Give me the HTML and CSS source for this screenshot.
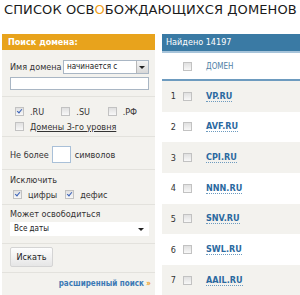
FILE: index.html
```html
<!DOCTYPE html>
<html lang="ru">
<head>
    <meta charset="UTF-8">
    <title>Список освобождающихся доменов</title>
    <link rel="stylesheet" href="styles.css">
</head>
<body>
    <h1 class="title">СПИСОК ОСВ<span class="accent">О</span>БОЖДАЮЩИХСЯ ДОМЕНОВ</h1>
    <div class="layout">
        <aside class="search">
            <div class="search-head">Поиск домена:</div>
            <div class="block block-name">
                <div class="row name-row">
                    <span class="label">Имя домена</span>
                    <div class="select select-small">начинается с<span class="arrow-btn"><span class="arrow"></span></span></div>
                </div>
                <div class="text-input"></div>
            </div>
            <div class="block block-zones">
                <div class="row zones">
                    <label class="check"><span class="cb checked"></span>.RU</label>
                    <label class="check"><span class="cb"></span>.SU</label>
                    <label class="check"><span class="cb"></span>.РФ</label>
                </div>
                <label class="check"><span class="cb"></span><span class="underline">Домены 3-го уровня</span></label>
            </div>
            <div class="block block-len">
                <div class="row">Не более <span class="len-input"></span> символов</div>
            </div>
            <div class="block block-excl">
                <div class="label">Исключить</div>
                <div class="row excl">
                    <label class="check"><span class="cb checked"></span>цифры</label>
                    <label class="check"><span class="cb checked"></span>дефис</label>
                </div>
            </div>
            <div class="block block-date">
                <div class="label">Может освободиться</div>
                <div class="select select-wide">Все даты<span class="arrow"></span></div>
            </div>
            <div class="block block-btn">
                <button class="btn">Искать</button>
            </div>
            <div class="block block-more">
                <a class="more" href="#">расширенный поиск <span class="raquo">»</span></a>
            </div>
        </aside>
        <section class="results">
            <div class="results-head">Найдено 14197</div>
            <div class="col-head">
                <span class="num"></span>
                <span class="cb"></span>
                <span class="col-name">ДОМЕН</span>
            </div>
            <div class="item odd"><span class="num">1</span><span class="cb"></span><a class="domain" href="#">VP.RU</a></div>
            <div class="item"><span class="num">2</span><span class="cb"></span><a class="domain" href="#">AVF.RU</a></div>
            <div class="item odd"><span class="num">3</span><span class="cb"></span><a class="domain" href="#">CPI.RU</a></div>
            <div class="item"><span class="num">4</span><span class="cb"></span><a class="domain" href="#">NNN.RU</a></div>
            <div class="item odd"><span class="num">5</span><span class="cb"></span><a class="domain" href="#">SNV.RU</a></div>
            <div class="item"><span class="num">6</span><span class="cb"></span><a class="domain" href="#">SWL.RU</a></div>
            <div class="item odd"><span class="num">7</span><span class="cb"></span><a class="domain" href="#">AAIL.RU</a></div>
        </section>
    </div>
</body>
</html>
```
FILE: styles.css
```css
body {
    margin: 0;
    background: #ffffff;
    font-family: "DejaVu Sans Condensed", "DejaVu Sans", sans-serif;
    font-size: 9px;
    color: #333333;
    overflow: hidden;
}
.title {
    margin: 0;
    padding: 3px 0 0 4px;
    height: 34px;
    box-sizing: border-box;
    font-family: "DejaVu Sans", sans-serif;
    font-weight: normal;
    font-size: 13px;
    letter-spacing: 0.1px;
    line-height: 14px;
    color: #1a1a1a;
    white-space: nowrap;
}
.accent {
    color: #f0a020;
}
.layout {
    display: flex;
    gap: 7px;
    padding-left: 2px;
}
.search {
    width: 153px;
    flex: none;
    background: #f3f2ee;
}
.search-head {
    height: 16px;
    line-height: 16px;
    padding-left: 6px;
    background: #e8a31c;
    color: #ffffff;
    font-weight: bold;
}
.block {
    padding: 0 6px 0 8px;
    border-bottom: 1px solid #e3e2dd;
}
.row {
    display: flex;
    align-items: center;
}
.label {
    line-height: 13px;
}
.block-name {
    padding-top: 10px;
    padding-bottom: 6px;
}
.name-row {
    justify-content: space-between;
    height: 14px;
}
.select {
    position: relative;
    box-sizing: border-box;
    height: 14px;
    line-height: 12px;
    padding-left: 3px;
    background: #ffffff;
    border: 1px solid #a9b6c4;
    font-size: 8px;
    color: #222222;
}
.select-small {
    width: 86px;
}
.arrow-btn {
    position: absolute;
    right: 0;
    top: 0;
    width: 11px;
    height: 12px;
    background: linear-gradient(#f4f4f4, #d8d8d8);
    border-left: 1px solid #b8b8b8;
}
.arrow {
    position: absolute;
    right: 3px;
    top: 5px;
    border-left: 3px solid transparent;
    border-right: 3px solid transparent;
    border-top: 3px solid #222222;
}
.text-input {
    margin-top: 3px;
    height: 11px;
    background: #ffffff;
    border: 1px solid #a9b6c4;
}
.block-zones {
    padding-top: 7px;
    padding-bottom: 2px;
}
.check {
    display: flex;
    align-items: center;
    gap: 6px;
    height: 15px;
}
.zones .check {
    width: 47px;
    margin-left: 5px;
    margin-right: -2px;
}
.block-zones > .check {
    margin-left: 5px;
}
.underline {
    text-decoration: underline;
}
.cb {
    display: inline-block;
    flex: none;
    width: 9px;
    height: 9px;
    box-sizing: border-box;
    border: 1px solid #c2c2c2;
    background: linear-gradient(#e0e0e0, #f8f8f8);
    position: relative;
}
.cb.checked::after {
    content: "";
    position: absolute;
    left: 2px;
    top: 0;
    width: 2px;
    height: 4px;
    border: solid #3a62b8;
    border-width: 0 1.5px 1.5px 0;
    transform: rotate(40deg);
}
.block-len {
    padding-top: 9px;
    padding-bottom: 6px;
}
.block-len .row {
    height: 17px;
}
.len-input {
    display: inline-block;
    box-sizing: border-box;
    width: 19px;
    height: 17px;
    background: #ffffff;
    border: 1px solid #a9c0d8;
    margin: 0 4px 0 3px;
}
.block-excl {
    padding-top: 4px;
    padding-bottom: 2px;
}
.excl .check {
    margin-left: 3px;
    margin-right: 8px;
}
.excl .check + .check {
    margin-left: 0;
}
.block-date {
    padding-top: 3px;
    padding-bottom: 7px;
}
.select-wide {
    margin-top: 1px;
    width: 100%;
    border-color: #ffffff;
}
.select-wide .arrow {
    right: 4px;
}
.block-btn {
    padding-top: 3px;
    padding-bottom: 5px;
}
.btn {
    display: block;
    height: 20px;
    width: 43px;
    padding: 0;
    font-family: inherit;
    font-size: 9px;
    color: #222222;
    background: linear-gradient(#fdfdfd, #e6e6e6);
    border: 1px solid #d4d4d4;
    border-radius: 2px;
}
.block-more {
    text-align: right;
    border-bottom: none;
    padding: 4px 4px 6px;
    line-height: 13px;
}
.more {
    color: #3b79b5;
    font-weight: bold;
    font-size: 8px;
    text-decoration: none;
}
.raquo {
    color: #f0a020;
}
.results {
    flex: 1;
}
.results-head {
    height: 17px;
    line-height: 17px;
    padding-left: 4px;
    background: #3a7aa4;
    border-bottom: 2px solid #a7c4da;
    color: #ffffff;
}
.col-head {
    display: flex;
    align-items: center;
    height: 26px;
    border-bottom: 2px solid #6d9bbf;
    color: #4f7fa6;
    font-size: 8px;
}
.num {
    width: 14px;
    flex: none;
    text-align: right;
    margin-right: 7px;
    color: #333333;
}
.col-name {
    margin-left: 14px;
}
.item {
    display: flex;
    align-items: center;
    height: 30.67px;
}
.item.odd {
    background: #f3f2ee;
}
.domain {
    margin-left: 14px;
    font-weight: bold;
    font-size: 9px;
    color: #2b69a0;
    text-decoration: none;
    border-bottom: 1px dotted #6d9bbf;
}
```
